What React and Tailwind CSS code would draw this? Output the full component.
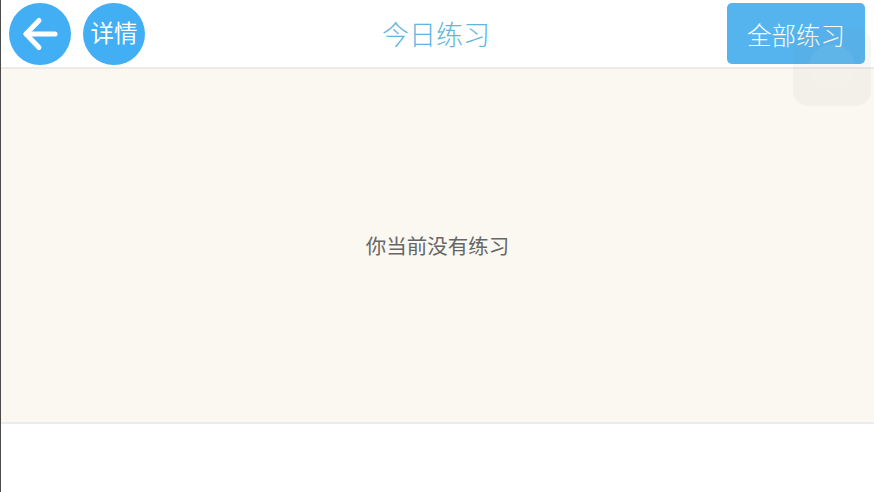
import React from 'react'

const cjk = "font-['Noto_Sans_CJK_SC','Noto_Sans',sans-serif]"

export default function App() {
  return (
    <div className={`relative h-[492px] w-[874px] overflow-hidden bg-white border-l border-[#4a4a4a] ${cjk}`}>
      {/* Header */}
      <div className="relative flex h-[67px] items-start justify-between pl-2 pr-[9px] pt-[3px]">
        <div className="flex gap-3">
          <button className="flex h-[62px] w-[62px] items-center justify-center rounded-full bg-[#42aef3]">
            <svg width="36" height="36" viewBox="0 0 36 36" fill="none" stroke="white" strokeWidth="5" strokeLinecap="round" strokeLinejoin="round">
              <path d="M33 18H4" />
              <path d="M17 4.5L4 18L17 31.5" />
            </svg>
          </button>
          <button className="flex h-[62px] w-[62px] items-center justify-center rounded-full bg-[#42aef3] pb-[3px] text-[23.5px] text-white">
            详情
          </button>
        </div>
        <h1 className="absolute left-[380px] top-[14px] w-[110px] whitespace-nowrap text-center text-[27px] font-light leading-[40px] text-[#62b5dd]">
          今日练习
        </h1>
        <button className="h-[61px] w-[138px] rounded-[5px] bg-[#55b4ee] pt-1 text-[24.5px] font-light text-white">
          全部练习
        </button>
      </div>

      {/* Content */}
      <div className="flex h-[355px] items-center justify-center border-t-2 border-[#ecebe8] bg-[#fbf8f1] pb-[1px]">
        <p className="whitespace-nowrap text-[20.5px] text-[#666666]">你当前没有练习</p>
      </div>
      <div className="h-[2px] bg-[#ecebef]" />

      {/* Floating assistive button */}
      <div className="absolute left-[792px] top-[28px] flex h-[78px] w-[78px] items-center justify-center rounded-[15px] bg-[#777777]/[0.06]">
        <div className="h-[46px] w-[46px] rounded-full bg-white/5" />
      </div>
    </div>
  )
}
